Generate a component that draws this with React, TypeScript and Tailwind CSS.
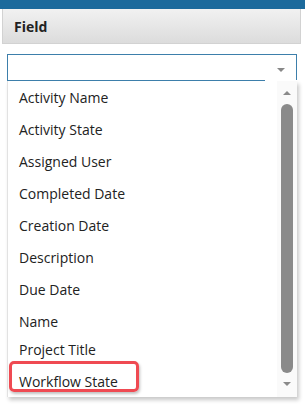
const fields = [
  { label: "Activity Name", h: "h-8" },
  { label: "Activity State", h: "h-8" },
  { label: "Assigned User", h: "h-8" },
  { label: "Completed Date", h: "h-8" },
  { label: "Creation Date", h: "h-8" },
  { label: "Description", h: "h-8" },
  { label: "Due Date", h: "h-8" },
  { label: "Name", h: "h-8" },
  { label: "Project Title", h: "h-[24px]" },
];

export default function App() {
  return (
    <div className="w-[305px] h-[404px] bg-white overflow-hidden font-['Open_Sans',sans-serif] text-[#222]">
      <div className="h-[9px] bg-[#1c6a9c]" />
      <div className="ml-[2px] mr-[4px] h-[35px] flex items-center pl-[11px] border-x border-b border-[#d2d2d2] bg-gradient-to-b from-[#f1f1f1] to-[#dcdcdc] text-[14px] font-bold">
        Field
      </div>

      <div className="pl-[7px] pr-[8px] pt-[10px]">
        <div className="relative h-[27px] border border-[#3d7fab]">
          <div className="absolute right-[11px] top-[13px] w-0 h-0 border-x-[4px] border-x-transparent border-t-[4px] border-t-[#888]" />
          <div className="absolute right-[-1px] bottom-[-1px] w-[32px] h-[1px] bg-white" />
        </div>

        <div className="flex h-[316px] bg-white border-l border-[#e2e2e2] shadow-[2px_3px_4px_rgba(0,0,0,0.22)]">
          <div className="flex-1 flex flex-col text-[14px]">
            {fields.map((f) => (
              <div key={f.label} className={`${f.h} flex items-center pl-[11px]`}>
                {f.label}
              </div>
            ))}
            <div className="relative h-[36px] flex items-center pl-[11px] pt-[4px]">
              Workflow State
              <div className="absolute left-[1px] top-0 w-[130px] h-[31px] border-[3px] border-[#ef4a52] rounded-[5px] shadow-[1px_2px_3px_rgba(0,0,0,0.25)]" />
            </div>
          </div>
          <div className="w-[20px] flex flex-col items-center bg-[#fafafa]">
            <div className="mt-[10px] w-0 h-0 border-x-[4px] border-x-transparent border-b-[4px] border-b-[#8a8a8a]" />
            <div className="mt-[9px] w-[12px] h-[269px] rounded-full bg-[#8a8a8a]" />
            <div className="mt-[9px] w-0 h-0 border-x-[4px] border-x-transparent border-t-[4px] border-t-[#8a8a8a]" />
          </div>
        </div>
      </div>
    </div>
  );
}
